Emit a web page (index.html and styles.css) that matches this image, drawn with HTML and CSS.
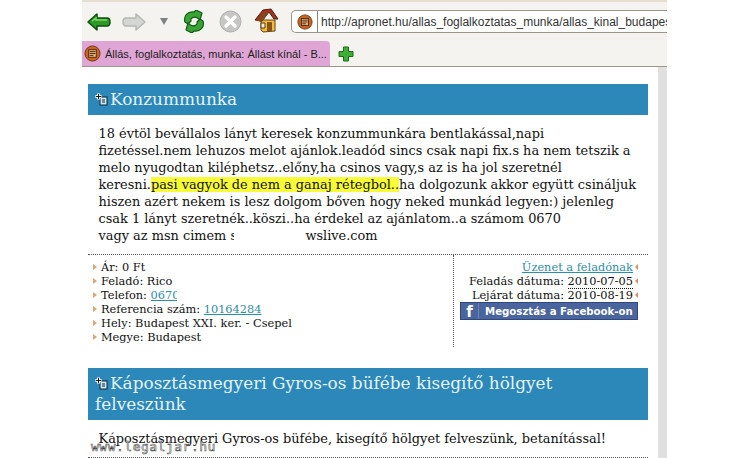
FILE: index.html
```html
<!DOCTYPE html>
<html lang="hu">

<head>
    <meta charset="UTF-8">
    <meta name="viewport" content="width=device-width, initial-scale=1.0">
    <title>Állás, foglalkoztatás, munka</title>
    <link rel="stylesheet" href="styles.css">
</head>

<body>
    <div class="browser">
        <div class="toolbar">
            <svg class="icon-back" width="24" height="18" viewBox="0 0 24 18">
                <path d="M1 9 L10 1 V5 H20 Q23 5 23 9 Q23 13 20 13 H10 V17 Z" fill="#2c9a24" stroke="#0c4f10" stroke-width="1.5" stroke-linejoin="round" />
                <path d="M5 8 L9 5 V7 H20" fill="none" stroke="#7fd86a" stroke-width="1.5" />
            </svg>
            <svg class="icon-forward" width="24" height="18" viewBox="0 0 24 18">
                <path d="M23 9 L14 1 V5 H4 Q1 5 1 9 Q1 13 4 13 H14 V17 Z" fill="#d3d6d3" stroke="#b4b8b4" stroke-width="1.5" stroke-linejoin="round" />
            </svg>
            <svg class="icon-drop" width="8" height="7" viewBox="0 0 8 7">
                <path d="M0 0 H8 L4 7 Z" fill="#7d8285" />
            </svg>
            <svg class="icon-reload" width="24" height="23" viewBox="0 0 24 23">
                <path d="M3 12 C1 6 6 1 12 2 L14 0 L20 3 L18 10 L15.500 8 C12 6 8 8 9 11 L6 14 Z" fill="#3aa335" stroke="#125c14" stroke-width="1.200" stroke-linejoin="round" />
                <path d="M21 11 C23 17 18 22 12 21 L10 23 L4 20 L6 13 L8.500 15 C12 17 16 15 15 12 L18 9 Z" fill="#3aa335" stroke="#125c14" stroke-width="1.200" stroke-linejoin="round" />
            </svg>
            <svg class="icon-stop" width="23" height="23" viewBox="0 0 23 23">
                <circle cx="11.500" cy="11.500" r="10.500" fill="#c6c6c4" stroke="#b0b0ae" />
                <path d="M7 7 L16 16 M16 7 L7 16" stroke="#fff" stroke-width="3.400" stroke-linecap="round" />
            </svg>
            <svg class="icon-home" width="25" height="25" viewBox="0 0 25 25">
                <path d="M7 12 H21 V23 L9 24 L7 22 Z" fill="#f2bd3c" stroke="#6b4310" />
                <path d="M1 12 L9 2 L17 1 L24 11 L20 11 L15 4 L8 13 Z" fill="#a8321f" stroke="#4a1f10" stroke-linejoin="round" />
                <path d="M3 13 L9 5 L15 4 L8 14 Z" fill="#7f4a20" />
                <path d="M13 14 H18 V23 H13 Z" fill="#8a5518" />
                <path d="M7 15 H11 V20 H7 Z" fill="#f6efd8" stroke="#5a3a10" />
            </svg>
            <div class="urlbar">
                <span class="url-fav">
                    <svg width="16" height="16" viewBox="0 0 18 18">
                        <circle cx="9" cy="9" r="8" fill="#c8641f" stroke="#6e3510" />
                        <rect x="5" y="5" width="8" height="8" fill="#e8b27a" stroke="#4a2a10" />
                        <path d="M6 7 H12 M6 9 H12 M6 11 H10" stroke="#4a2a10" />
                    </svg>
                </span>
                <span class="url-text">http://apronet.hu/allas_foglalkoztatas_munka/allas_kinal_budapest</span>
            </div>
        </div>

        <div class="tabbar">
            <div class="tab">
                <svg class="tab-fav" width="17" height="17" viewBox="0 0 18 18">
                    <circle cx="9" cy="9" r="8" fill="#c8641f" stroke="#6e3510" />
                    <rect x="5" y="5" width="8" height="8" fill="#e8b27a" stroke="#4a2a10" />
                    <path d="M6 7 H12 M6 9 H12 M6 11 H10" stroke="#4a2a10" />
                </svg>
                <span class="tab-title">Állás, foglalkoztatás, munka: Állást kínál - B...</span>
            </div>
            <svg class="tab-new" width="16" height="16" viewBox="0 0 16 16">
                <path d="M5.500 1 H10.500 V5.500 H15 V10.500 H10.500 V15 H5.500 V10.500 H1 V5.500 H5.500 Z" fill="#3fae35" stroke="#1d6b1c" stroke-linejoin="round" />
            </svg>
        </div>

        <div class="viewport">
            <div class="page">
                <h2 class="ad-title">
                    <svg class="plus-doc" width="13" height="13" viewBox="0 0 13 13">
                        <rect x="5" y="4" width="7" height="8" fill="#cfe6f5" stroke="#123" />
                        <path d="M7 7 H10 M7 9 H10" stroke="#123" />
                        <path d="M3.500 0.500 V6.500 M0.500 3.500 H6.500" stroke="#fff" stroke-width="3" />
                        <path d="M3.500 1 V6 M1 3.500 H6" stroke="#111" />
                    </svg>Konzummunka
                </h2>
                <p class="ad-text">18 évtöl bevállalos lányt keresek konzummunkára bentlakással,napi fizetéssel.nem lehuzos melot ajánlok.leadód sincs csak napi fix.s ha nem tetszik a melo nyugodtan kiléphetsz..előny,ha csinos vagy,s az is ha jol szeretnél<br>keresni.<mark class="hl">pasi vagyok de nem a ganaj rétegbol..</mark>ha dolgozunk akkor együtt csináljuk hiszen azért nekem is lesz dolgom bőven hogy neked munkád legyen:) jelenleg csak 1 lányt szeretnék..köszi..ha érdekel az ajánlatom..a számom 0670<br>vagy az msn cimem <span class="cut">s</span><span class="blank"></span>wslive.com</p>

                <div class="ad-info">
                    <ul class="ad-list">
                        <li>Ár: 0 Ft</li>
                        <li>Feladó: Rico</li>
                        <li>Telefon: <a href="#" class="phone">0670</a></li>
                        <li>Referencia szám: <a href="#">10164284</a></li>
                        <li>Hely: Budapest XXI. ker. - Csepel</li>
                        <li>Megye: Budapest</li>
                    </ul>
                    <div class="ad-side">
                        <ul class="side-list">
                            <li><a href="#">Üzenet a feladónak</a></li>
                            <li>Feladás dátuma: <span class="date">2010-07-05</span></li>
                            <li>Lejárat dátuma: 2010-08-19</li>
                        </ul>
                        <div class="fb-share">
                            <span class="fb-logo">f</span>
                            <span class="fb-text">Megosztás a Facebook-on</span>
                        </div>
                    </div>
                </div>

                <h2 class="ad-title second">
                    <svg class="plus-doc" width="13" height="13" viewBox="0 0 13 13">
                        <rect x="5" y="4" width="7" height="8" fill="#cfe6f5" stroke="#123" />
                        <path d="M7 7 H10 M7 9 H10" stroke="#123" />
                        <path d="M3.500 0.500 V6.500 M0.500 3.500 H6.500" stroke="#fff" stroke-width="3" />
                        <path d="M3.500 1 V6 M1 3.500 H6" stroke="#111" />
                    </svg>Káposztásmegyeri Gyros-os büfébe kisegítő hölgyet felveszünk
                </h2>
                <p class="ad-text short">Káposztásmegyeri Gyros-os büfébe, kisegítő hölgyet felveszünk, betanítással!</p>
                <div class="ad-info last"></div>
            </div>
            <div class="scrollbar"></div>
        </div>
    </div>
    <div class="watermark">www.legaljar.hu</div>
</body>

</html>
```

FILE: styles.css
```css
html,
body {
    margin: 0;
    padding: 0;
    height: 458px;
    overflow: hidden;
    background: #fff;
    font-family: "DejaVu Serif", serif;
    color: #111;
}

.browser {
    width: 585px;
    height: 458px;
    margin-left: 82px;
    display: flex;
    flex-direction: column;
    overflow: hidden;
}

/* toolbar */
.toolbar {
    height: 41px;
    flex-shrink: 0;
    box-sizing: border-box;
    border-top: 2px solid #e6dfd0;
    padding-left: 5px;
    display: flex;
    align-items: center;
    background: #f5f3ef;
}

.icon-back {
    margin-right: 11px;
}

.icon-forward {
    margin-right: 14px;
}

.icon-drop {
    margin-right: 14px;
}

.icon-reload {
    margin-right: 13px;
}

.icon-stop {
    margin-right: 12px;
}

.icon-home {
    margin-right: 12px;
    margin-top: -3px;
}

.urlbar {
    flex: 1;
    height: 23px;
    min-width: 0;
    display: flex;
    align-items: center;
    box-sizing: border-box;
    background: #fff;
    border: 1px solid #9c9688;
    border-right: none;
    border-radius: 5px 0 0 5px;
}

.url-fav {
    width: 26px;
    height: 21px;
    flex-shrink: 0;
    box-sizing: border-box;
    border-right: 1px solid #8a8578;
    display: flex;
    align-items: center;
    justify-content: center;
}

.url-text {
    padding-left: 3px;
    font-family: "Liberation Sans", sans-serif;
    font-size: 12px;
    color: #333;
    white-space: nowrap;
    overflow: hidden;
}

/* tabs */
.tabbar {
    height: 26px;
    flex-shrink: 0;
    box-sizing: border-box;
    border-bottom: 1px solid #9c9688;
    display: flex;
    align-items: center;
    background: #f5f3ef;
}

.tab {
    width: 248px;
    height: 25px;
    padding-left: 2px;
    box-sizing: border-box;
    display: flex;
    align-items: center;
    gap: 4px;
    background: #dfa6d5;
    border-radius: 0 4px 0 0;
}

.tab-fav {
    flex-shrink: 0;
}

.tab-title {
    font-family: "Liberation Sans", sans-serif;
    font-size: 11px;
    color: #222;
    white-space: nowrap;
}

.tab-new {
    margin-left: 8px;
}

/* page */
.viewport {
    flex: 1;
    display: flex;
    min-height: 0;
}

.page {
    flex: 1;
    min-width: 0;
    padding: 17px 10px 0 6px;
}

.scrollbar {
    width: 9px;
    background: #e0e0e0;
}

.ad-title {
    margin: 0;
    padding: 5px 5px 5px 7px;
    background: #2b88b9;
    color: #e6f3fa;
    font-size: 16.900px;
    font-weight: normal;
    line-height: 21px;
}

.plus-doc {
    margin-right: 2px;
    vertical-align: -1px;
}

.ad-title.second {
    margin-top: 21px;
}

.ad-text {
    margin: 0;
    padding: 10px 8px 10px 10.500px;
    font-size: 12.900px;
    line-height: 17px;
}

.ad-text.short {
    padding-bottom: 0;
}

.hl {
    background: #f8fb37;
    color: inherit;
}

.cut {
    display: inline-block;
    width: 4px;
    overflow: hidden;
    vertical-align: bottom;
}

.blank {
    display: inline-block;
    width: 71px;
}

.ad-info {
    display: flex;
    border-top: 1px dotted #555;
    height: 92px;
}

.ad-info.last {
    margin-top: 10px;
}

.ad-list,
.side-list {
    margin: 0;
    padding: 0;
    list-style: none;
    font-size: 11.350px;
    line-height: 14px;
}

.ad-list {
    flex: 1;
    padding-top: 5px;
}

.ad-list li {
    padding-left: 13px;
    position: relative;
}

.ad-list li::before {
    content: "";
    position: absolute;
    left: 5px;
    top: 4px;
    border-left: 4px solid #d9a679;
    border-top: 3px solid transparent;
    border-bottom: 3px solid transparent;
}

.ad-list a,
.side-list a {
    color: #2c8fa6;
}

.phone {
    display: inline-block;
    width: 26px;
    overflow: hidden;
    vertical-align: bottom;
}

.ad-side {
    width: 178px;
    flex-shrink: 0;
    border-left: 1px dotted #555;
    padding: 5px 0 0 6px;
    margin-right: 10px;
}

.side-list {
    text-align: right;
}

.side-list li {
    padding-right: 5px;
    position: relative;
}

.side-list li::after {
    content: "";
    position: absolute;
    right: 0;
    top: 4px;
    border-right: 3px solid #d9906a;
    border-top: 3px solid transparent;
    border-bottom: 3px solid transparent;
}

.date {
    border-bottom: 1px dotted #111;
}

.fb-share {
    height: 18px;
    display: flex;
    align-items: center;
    box-sizing: border-box;
    background: #4a649d;
    border: 1px solid #2f4680;
    color: #fff;
    font-family: "DejaVu Sans", sans-serif;
    overflow: hidden;
}

.fb-logo {
    width: 17px;
    flex-shrink: 0;
    text-align: center;
    font-weight: bold;
    font-size: 15px;
    line-height: 16px;
    padding-top: 2px;
    border-right: 1px solid #6d83b4;
}

.fb-text {
    padding-left: 6px;
    font-size: 10.200px;
    font-weight: bold;
    white-space: nowrap;
}

.watermark {
    position: absolute;
    left: 91px;
    top: 439px;
    font-family: "DejaVu Sans Mono", monospace;
    font-size: 13px;
    letter-spacing: 0.500px;
    color: #fff;
    -webkit-text-stroke: 0.500px #333;
}
```
